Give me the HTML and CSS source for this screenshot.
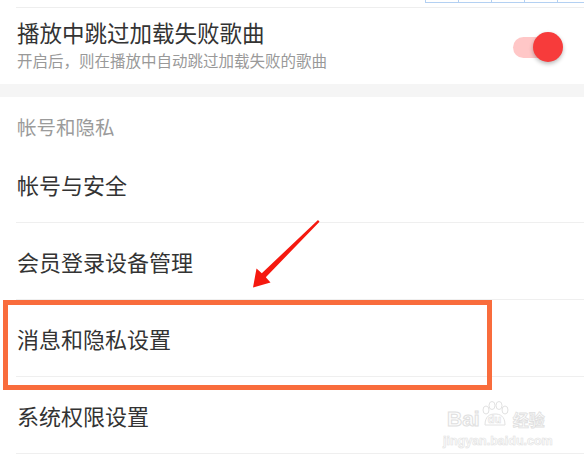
FILE: index.html
```html
<!DOCTYPE html>
<html lang="zh-CN">
<head>
<meta charset="utf-8">
<link rel="stylesheet" href="styles.css">
</head>
<body>
<div class="page">
  <div class="top">
    <div class="grid"><span></span><span></span><span></span><span></span><span></span></div>
  </div>
  <div class="switch-row">
    <div class="texts">
      <div class="title">播放中跳过加载失败歌曲</div>
      <div class="sub">开启后，则在播放中自动跳过加载失败的歌曲</div>
    </div>
    <div class="toggle"><span class="track"></span><span class="knob"></span></div>
  </div>
  <div class="band"></div>
  <div class="heading">帐号和隐私</div>
  <div class="item">帐号与安全</div>
  <div class="item">会员登录设备管理</div>
  <div class="item">消息和隐私设置</div>
  <div class="item">系统权限设置</div>

  <div class="highlight"></div>
  <svg class="arrow" width="584" height="460" viewBox="0 0 584 460">
    <polygon points="318,220 319.5,221.8 265.8,277.2 270.5,282.5 253,287.5 256.5,268.5 261.8,273.2" fill="#f5190f"/>
  </svg>
  <div class="watermark">
    <div class="wm-top">
      <span class="wm-bai">Bai</span>
      <span class="wm-paw">
        <svg width="30" height="28" viewBox="0 0 30 28">
          <g fill="none" stroke="#e2e2e2" stroke-width="1">
            <ellipse cx="6" cy="9" rx="3" ry="4"/>
            <ellipse cx="12" cy="4.5" rx="3" ry="4"/>
            <ellipse cx="19" cy="4.5" rx="3" ry="4"/>
            <ellipse cx="25" cy="9" rx="3" ry="4"/>
            <path d="M5 24 C5 15 10 13 15 13 C20 13 25 15 25 24 Z"/>
          </g>
        </svg>
        <span class="wm-du">du</span>
      </span>
      <span class="wm-jy">经验</span>
    </div>
    <div class="wm-url">jingyan.baidu.com</div>
  </div>
</div>
</body>
</html>
```
FILE: styles.css
```css
* { box-sizing: border-box; }
html, body { margin: 0; padding: 0; background: #fff; }
body {
  width: 584px;
  height: 460px;
  overflow: hidden;
  font-family: "Noto Sans CJK SC", "Noto Sans", sans-serif;
  color: #333;
}
.page { position: relative; width: 584px; height: 460px; }

.top { height: 7px; display: flex; justify-content: flex-end; }
.grid { display: flex; height: 4px; }
.grid span {
  width: 33px;
  height: 3px;
  border-left: 1px solid #b3d0f2;
  border-bottom: 1px solid #b3d0f2;
}
.grid span:last-child { width: 27px; }

.switch-row {
  margin-left: 16px;
  border-top: 1px solid #eeeeee;
  height: 77px;
  display: flex;
  align-items: center;
  justify-content: space-between;
  padding-right: 21px;
}
.texts { padding-left: 1px; margin-bottom: 3px; }
.title { font-size: 22.5px; line-height: 26px; color: #333; }
.sub { font-size: 15.5px; line-height: 20px; color: #999; margin-top: 5px; }

.toggle { position: relative; width: 50px; height: 30px; margin-top: 2px; }
.track {
  position: absolute; left: 0; top: 5px;
  width: 44px; height: 21px; border-radius: 11px;
  background: #ffc7c7;
}
.knob {
  position: absolute; right: 0; top: 0;
  width: 30px; height: 30px; border-radius: 50%;
  background: #f73b3b;
  box-shadow: 0 2px 4px rgba(0,0,0,0.28);
}

.band { height: 13px; background: #f5f5f5; }

.heading {
  height: 49px;
  padding: 18px 0 0 17px;
  font-size: 19.5px;
  line-height: 24px;
  color: #9b9b9b;
}

.item {
  margin-left: 16px;
  padding-left: 1px;
  height: 77px;
  border-bottom: 1px solid #efefef;
  display: flex;
  align-items: center;
  font-size: 22px;
  color: #333;
}

.highlight {
  position: absolute;
  left: 3px; top: 300px;
  width: 489px; height: 90px;
  border: 5px solid #f96c3c;
}
.arrow { position: absolute; left: 0; top: 0; }

.watermark {
  position: absolute;
  left: 443px; top: 396px;
  width: 112px;
  color: #fff;
}
.wm-top { display: flex; align-items: flex-end; height: 33px; }
.wm-bai {
  font-family: "Liberation Sans", Arial, sans-serif;
  font-weight: bold;
  font-size: 21px;
  line-height: 21px;
  margin-left: 4px;
  color: #fdfdfd;
  -webkit-text-stroke: 1px #e0e0e0;
}
.wm-paw { position: relative; width: 30px; height: 28px; margin-left: 0; }
.wm-paw svg { position: absolute; left: 0; top: 0; }
.wm-du {
  position: absolute; left: 8px; top: 12px;
  font-family: "Liberation Sans", Arial, sans-serif;
  font-weight: bold; font-size: 11px;
  color: #fff;
  -webkit-text-stroke: 0.6px #e0e0e0;
}
.wm-jy {
  font-size: 16px; line-height: 20px; font-weight: bold;
  margin-left: 3px;
  color: #fdfdfd;
  -webkit-text-stroke: 0.8px #e0e0e0;
}
.wm-url {
  font-family: "Liberation Sans", Arial, sans-serif;
  font-weight: bold;
  font-size: 12.5px;
  line-height: 16px;
  margin-top: 4px;
  color: #fdfdfd;
  -webkit-text-stroke: 0.6px #e2e2e2;
}
```
